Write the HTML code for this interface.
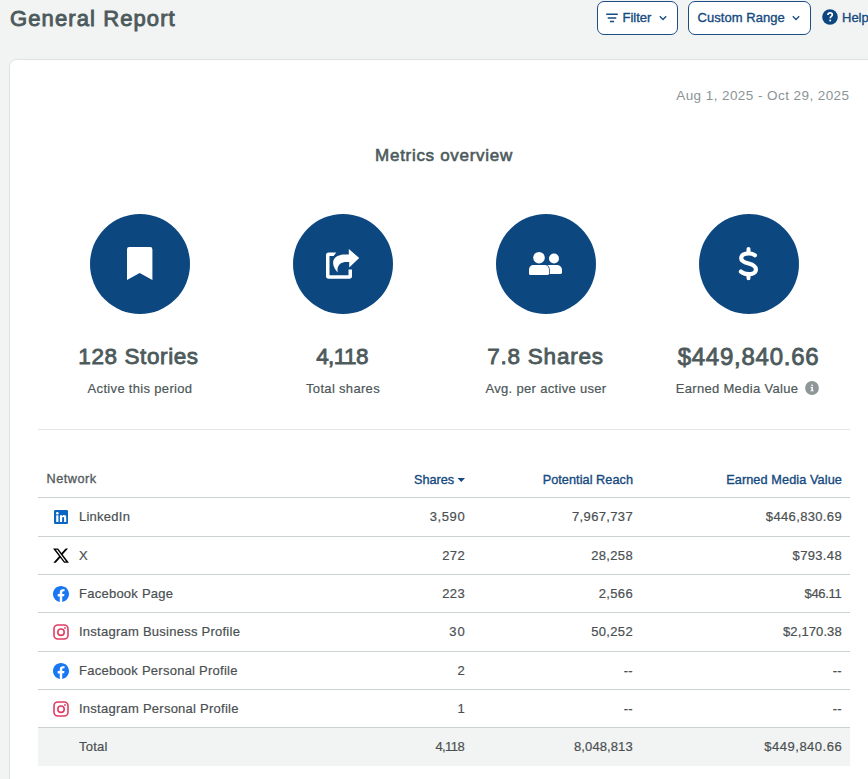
<!DOCTYPE html>
<html>
<head>
<meta charset="utf-8">
<style>
html,body{margin:0;padding:0;}
body{width:868px;height:779px;overflow:hidden;background:#f2f3f3;position:relative;font-family:"Liberation Sans",sans-serif;color:#4b5759;}
.a{position:absolute;white-space:nowrap;}
.title{left:10px;top:7.5px;font-size:22px;line-height:22px;font-weight:400;-webkit-text-stroke:0.9px #4d5a5c;letter-spacing:1.1px;color:#4d5a5c;}
.btn{position:absolute;top:1px;height:34px;box-sizing:border-box;border:1.5px solid #1c4e84;border-radius:7px;background:#fff;}
.btxt{font-size:13px;line-height:13px;font-weight:400;color:#154a80;-webkit-text-stroke:0.35px #154a80;}
.card{position:absolute;left:9px;top:59px;width:900px;height:760px;background:#fff;border:1px solid #dfe2e2;border-radius:7.5px;box-sizing:border-box;}
.date{right:18.5px;top:88.7px;font-size:13.5px;line-height:13.5px;color:#8b9395;letter-spacing:0.43px;}
.mo{left:0;width:888px;text-align:center;top:147.2px;font-size:17px;line-height:17px;font-weight:400;color:#4d5a5c;-webkit-text-stroke:0.6px #4d5a5c;letter-spacing:0.7px;}
.circ{position:absolute;top:214px;width:100px;height:100px;border-radius:50%;background:#0c4780;}
.big{top:346px;font-size:22.5px;line-height:22.5px;font-weight:400;-webkit-text-stroke:0.85px #4d5a5c;letter-spacing:0.6px;color:#4d5a5c;text-align:center;width:200px;}
.lbl{top:381.8px;font-size:13px;line-height:13px;color:#4d5759;text-align:center;width:200px;letter-spacing:0.32px;-webkit-text-stroke:0.2px #4d5759;}
.hr{position:absolute;left:38px;width:812px;height:1px;background:#e3e6e6;}
.tl{position:absolute;left:38px;width:812px;height:1px;background:#cdd2d2;}
.th{top:472.95px;font-size:12.7px;line-height:12.7px;font-weight:400;-webkit-text-stroke:0.35px currentColor;}
.td{font-size:13px;line-height:13px;color:#4a5052;letter-spacing:0.25px;-webkit-text-stroke:0.2px #4a5052;}
.n{letter-spacing:0.35px;}
.r{text-align:right;}
</style>
</head>
<body>
<div class="a title">General Report</div>

<!-- Filter button -->
<div class="btn" style="left:597px;width:81px;"></div>
<svg class="a" style="left:604px;top:10px" width="16" height="16" viewBox="0 0 16 16">
  <path d="M2.2 4.2H13.8M3.7 8H12.3M5.9 11.5H10.1" stroke="#154a80" stroke-width="1.35" fill="none"/>
</svg>
<div class="a btxt" style="left:622.5px;top:10.8px;">Filter</div>
<svg class="a" style="left:657px;top:13px" width="12" height="10" viewBox="0 0 12 10">
  <path d="M2.8 3.3L6 6.5L9.2 3.3" stroke="#154a80" stroke-width="1.3" fill="none"/>
</svg>

<!-- Custom Range button -->
<div class="btn" style="left:688px;width:123px;"></div>
<div class="a btxt" style="left:697.5px;top:11px;letter-spacing:0.05px;">Custom Range</div>
<svg class="a" style="left:790px;top:13px" width="12" height="10" viewBox="0 0 12 10">
  <path d="M2.8 3.3L6 6.5L9.2 3.3" stroke="#154a80" stroke-width="1.3" fill="none"/>
</svg>

<!-- Help -->
<svg class="a" style="left:822px;top:9px" width="16" height="16" viewBox="0 0 16 16">
  <circle cx="8" cy="8" r="7.8" fill="#0c4780"/>
  <path d="M5.9 6.1C5.9 4.7 6.8 3.8 8.1 3.8C9.4 3.8 10.3 4.6 10.3 5.8C10.3 7.4 8.2 7.5 8.2 9.3" stroke="#fff" stroke-width="1.7" fill="none"/>
  <circle cx="8.2" cy="11.5" r="1" fill="#fff"/>
</svg>
<div class="a btxt" style="left:842px;top:11px;">Help</div>

<!-- Card -->
<div class="card"></div>
<div class="a date">Aug 1, 2025 - Oct 29, 2025</div>
<div class="a mo">Metrics overview</div>

<!-- circles -->
<div class="circ" style="left:90px"></div>
<div class="circ" style="left:293px"></div>
<div class="circ" style="left:496px"></div>
<div class="circ" style="left:699px"></div>

<svg class="a" style="left:0;top:0" width="868" height="779" viewBox="0 0 868 779">
  <!-- bookmark -->
  <path d="M127 249.2Q127 247 129.2 247H150.2Q152.4 247 152.4 249.2V280L139.7 273L127 280Z" fill="#fff"/>
  <!-- share box -->
  <path d="M336.3 252.5H328.6Q326 252.5 326 255.1V276.1Q326 278.7 328.6 278.7H349.4Q352 278.7 352 276.1V269.4H348.5V275.2H329.5V256H333.6Z" fill="#fff"/>
  <path d="M348.8 249L359.2 258L349.2 267.5V262.1H346.5C341 262.1 336.5 265 337.7 272.5C333.8 268.5 332.3 264 333.5 260.2C335.3 255.8 340 254.4 346 254.4H348.8Z" fill="#fff"/>
  <!-- users -->
  <path d="M547 274V265H557C559.8 265 562 267.3 562 270V272.6Q562 274 560.6 274Z" fill="#fff"/>
  <path d="M529 273.4V269.6C529 267.1 531 265 533.6 265H544.4C547 265 549 267.1 549 269.6V273.4Q549 275 547.4 275H530.6Q529 275 529 273.4Z" fill="#fff" stroke="#0c4780" stroke-width="1.5" paint-order="stroke"/>
  <circle cx="539" cy="257.7" r="5.8" fill="#fff"/>
  <circle cx="554" cy="258.5" r="5" fill="#fff"/>
  <!-- dollar -->
  <path d="M754.9 255.3C753.4 253.9 751.2 253.3 748.6 253.3C744.4 253.3 741.2 255.2 741.2 258.2C741.2 261.4 744.8 262.5 748.6 263.5C752.8 264.6 755.9 266 755.9 269.5C755.9 272.5 752.8 274.2 748.6 274.2C745.5 274.2 742.8 273.3 740.9 271.6" stroke="#fff" stroke-width="4.2" fill="none" stroke-linecap="round"/>
  <path d="M748.5 249V253M748.5 274V278.3" stroke="#fff" stroke-width="4" stroke-linecap="round"/>
</svg>

<div class="a big" style="left:38.5px;">128 Stories</div>
<div class="a big" style="left:242px;letter-spacing:-0.6px;">4,118</div>
<div class="a big" style="left:445.5px;letter-spacing:0.75px;">7.8 Shares</div>
<div class="a big" style="left:648.5px;font-size:24px;letter-spacing:0.75px;">$449,840.66</div>

<div class="a lbl" style="left:40px;">Active this period</div>
<div class="a lbl" style="left:243px;">Total shares</div>
<div class="a lbl" style="left:446px;">Avg. per active user</div>
<div class="a lbl" style="left:637px;">Earned Media Value</div>
<svg class="a" style="left:805px;top:381px" width="14" height="14" viewBox="0 0 14 14">
  <circle cx="7" cy="7" r="6.9" fill="#8f9698"/>
  <path d="M5.6 6.1H7.9V9.4H8.8V10.2H5.4V9.4H6.4V6.9H5.6Z" fill="#fff"/>
  <circle cx="7.1" cy="4.3" r="0.9" fill="#fff"/>
</svg>

<div class="hr" style="top:429px"></div>

<!-- table -->
<div class="a th" style="left:46.5px;color:#555b5d;letter-spacing:0.5px;">Network</div>
<div class="a th" style="left:414px;top:473.6px;color:#154a80;">Shares</div>
<svg class="a" style="left:456px;top:475.8px" width="10" height="8" viewBox="0 0 10 8"><path d="M1.5 2H9L5.25 6Z" fill="#154a80"/></svg>
<div class="a th r" style="left:433px;top:473.6px;width:200px;color:#154a80;letter-spacing:0.05px;">Potential Reach</div>
<div class="a th r" style="left:642px;top:473.6px;width:200px;color:#154a80;letter-spacing:0.1px;">Earned Media Value</div>

<div class="tl" style="top:497px"></div>
<div class="tl" style="top:536px"></div>
<div class="tl" style="top:574px"></div>
<div class="tl" style="top:612px"></div>
<div class="tl" style="top:651px"></div>
<div class="tl" style="top:689px"></div>
<div class="tl" style="top:727px"></div>
<div class="a" style="left:38px;top:728px;width:812px;height:38px;background:#f2f3f3;"></div>

<!-- icons -->
<svg class="a" style="left:54px;top:510px" width="14" height="14" viewBox="0 0 14 14">
  <rect x="0" y="0" width="14" height="14" rx="1.2" fill="#0a66c2"/>
  <rect x="2.2" y="5.3" width="2.2" height="6.7" fill="#fff"/>
  <circle cx="3.3" cy="3.2" r="1.3" fill="#fff"/>
  <path d="M5.9 5.3H8V6.3C8.4 5.6 9.2 5.1 10.2 5.1C11.8 5.1 12.2 6.2 12.2 7.8V12H10.1V8.3C10.1 7.5 9.9 6.9 9.2 6.9C8.4 6.9 8.1 7.5 8.1 8.3V12H5.9Z" fill="#fff"/>
</svg>
<svg class="a" style="left:53px;top:548px" width="16" height="15.5" viewBox="0 0 24 23.3">
  <path d="M18.901 0.653h3.68l-8.04 9.19L24 22.346h-7.406l-5.8-7.584-6.638 7.584H.474l8.6-9.83L0 0.654h7.594l5.243 6.932ZM17.61 20.144h2.039L6.486 2.74H4.298Z" fill="#000"/>
</svg>
<svg class="a" style="left:53px;top:586px" width="16" height="16" viewBox="0 0 24 24">
  <path fill="#1877F2" d="M24 12.073C24 5.405 18.627 0 12 0S0 5.405 0 12.073C0 18.1 4.388 23.094 10.125 24v-8.437H7.078v-3.49h3.047V9.41c0-3.025 1.792-4.697 4.533-4.697 1.312 0 2.686.236 2.686.236v2.971H15.83c-1.491 0-1.956.93-1.956 1.886v2.265h3.328l-.532 3.49h-2.796V24C19.612 23.094 24 18.1 24 12.073z"/>
</svg>
<svg class="a" style="left:53px;top:624px" width="16" height="16" viewBox="0 0 16 16">
  <rect x="1" y="1" width="14" height="14" rx="3.8" stroke="#e03d63" stroke-width="1.6" fill="none"/>
  <circle cx="8" cy="8.2" r="3.2" stroke="#e03d63" stroke-width="1.6" fill="none"/>
  <circle cx="12" cy="4" r="0.9" fill="#e03d63"/>
</svg>
<svg class="a" style="left:53px;top:663px" width="16" height="16" viewBox="0 0 24 24">
  <path fill="#1877F2" d="M24 12.073C24 5.405 18.627 0 12 0S0 5.405 0 12.073C0 18.1 4.388 23.094 10.125 24v-8.437H7.078v-3.49h3.047V9.41c0-3.025 1.792-4.697 4.533-4.697 1.312 0 2.686.236 2.686.236v2.971H15.83c-1.491 0-1.956.93-1.956 1.886v2.265h3.328l-.532 3.49h-2.796V24C19.612 23.094 24 18.1 24 12.073z"/>
</svg>
<svg class="a" style="left:53px;top:701px" width="16" height="16" viewBox="0 0 16 16">
  <rect x="1" y="1" width="14" height="14" rx="3.8" stroke="#e03d63" stroke-width="1.6" fill="none"/>
  <circle cx="8" cy="8.2" r="3.2" stroke="#e03d63" stroke-width="1.6" fill="none"/>
  <circle cx="12" cy="4" r="0.9" fill="#e03d63"/>
</svg>

<!-- rows -->
<div class="a td" style="left:79px;top:509.8px;">LinkedIn</div>
<div class="a td r n" style="left:265.25px;width:200px;top:509.8px;letter-spacing:0.6px;">3,590</div>
<div class="a td r n" style="left:433px;width:200px;top:509.8px;">7,967,737</div>
<div class="a td r n" style="left:642px;width:200px;top:509.8px;">$446,830.69</div>

<div class="a td" style="left:79px;top:548.5px;">X</div>
<div class="a td r n" style="left:265px;width:200px;top:548.5px;">272</div>
<div class="a td r n" style="left:433px;width:200px;top:548.5px;">28,258</div>
<div class="a td r n" style="left:642px;width:200px;top:548.5px;">$793.48</div>

<div class="a td" style="left:79px;top:586.9px;">Facebook Page</div>
<div class="a td r n" style="left:265px;width:200px;top:586.9px;">223</div>
<div class="a td r n" style="left:433px;width:200px;top:586.9px;">2,566</div>
<div class="a td r n" style="left:641.3px;width:200px;top:586.9px;letter-spacing:-0.35px;">$46.11</div>

<div class="a td" style="left:79px;top:625.3px;">Instagram Business Profile</div>
<div class="a td r n" style="left:265.6px;width:200px;top:625.3px;letter-spacing:0.95px;">30</div>
<div class="a td r n" style="left:433px;width:200px;top:625.3px;">50,252</div>
<div class="a td r n" style="left:641.75px;width:200px;top:625.3px;letter-spacing:0.1px;">$2,170.38</div>

<div class="a td" style="left:79px;top:663.7px;">Facebook Personal Profile</div>
<div class="a td r n" style="left:265px;width:200px;top:663.7px;">2</div>
<div class="a td r n" style="left:433px;width:200px;top:663.7px;">--</div>
<div class="a td r n" style="left:642px;width:200px;top:663.7px;">--</div>

<div class="a td" style="left:79px;top:702.1px;">Instagram Personal Profile</div>
<div class="a td r n" style="left:265px;width:200px;top:702.1px;">1</div>
<div class="a td r n" style="left:433px;width:200px;top:702.1px;">--</div>
<div class="a td r n" style="left:642px;width:200px;top:702.1px;">--</div>

<div class="a td" style="left:79px;top:739.6px;">Total</div>
<div class="a td r n" style="left:264.05px;width:200px;top:739.6px;letter-spacing:-0.6px;">4,118</div>
<div class="a td r n" style="left:432.75px;width:200px;top:739.6px;letter-spacing:0.1px;">8,048,813</div>
<div class="a td r n" style="left:642.15px;width:200px;top:739.6px;letter-spacing:0.5px;">$449,840.66</div>

</body>
</html>
